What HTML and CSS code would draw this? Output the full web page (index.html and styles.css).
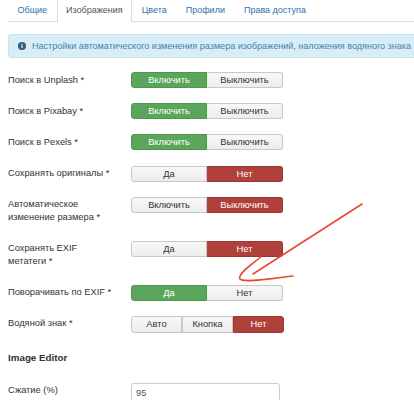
FILE: index.html
```html
<!DOCTYPE html>
<html lang="ru">
<head>
<meta charset="utf-8">
<link rel="stylesheet" href="styles.css">
</head>
<body>
<div class="page">
  <ul class="tabs">
    <li class="tab">Общие</li>
    <li class="tab active">Изображения</li>
    <li class="tab">Цвета</li>
    <li class="tab">Профили</li>
    <li class="tab">Права доступа</li>
  </ul>

  <div class="alert">
    <span class="info-icon">i</span>
    <span class="alert-text">Настройки автоматического изменения размера изображений, наложения водяного знака</span>
  </div>

  <div class="form">
    <div class="row">
      <div class="label">Поиск в Unplash *</div>
      <div class="group"><span class="btn green">Включить</span><span class="btn">Выключить</span></div>
    </div>
    <div class="row">
      <div class="label">Поиск в Pixabay *</div>
      <div class="group"><span class="btn green">Включить</span><span class="btn">Выключить</span></div>
    </div>
    <div class="row">
      <div class="label">Поиск в Pexels *</div>
      <div class="group"><span class="btn green">Включить</span><span class="btn">Выключить</span></div>
    </div>
    <div class="row">
      <div class="label">Сохранять оригиналы *</div>
      <div class="group"><span class="btn">Да</span><span class="btn red">Нет</span></div>
    </div>
    <div class="row">
      <div class="label">Автоматическое изменение размера *</div>
      <div class="group"><span class="btn">Включить</span><span class="btn red">Выключить</span></div>
    </div>
    <div class="row">
      <div class="label">Сохранять EXIF метатеги *</div>
      <div class="group"><span class="btn">Да</span><span class="btn red">Нет</span></div>
    </div>
    <div class="row">
      <div class="label">Поворачивать по EXIF *</div>
      <div class="group"><span class="btn green">Да</span><span class="btn">Нет</span></div>
    </div>
    <div class="row">
      <div class="label">Водяной знак *</div>
      <div class="group three"><span class="btn">Авто</span><span class="btn">Кнопка</span><span class="btn red">Нет</span></div>
    </div>

    <h3 class="section">Image Editor</h3>

    <div class="row">
      <div class="label">Сжатие (%)</div>
      <div class="input">95</div>
    </div>
  </div>

  <svg class="arrow" width="414" height="400" viewBox="0 0 414 400">
    <path d="M362 204 L253 274" />
    <path d="M261 257 C252 264 237 274 240 279 C243 283 268 279 293 276" />
  </svg>
</div>
</body>
</html>
```

FILE: styles.css
```css
html, body {
  margin: 0;
  padding: 0;
  overflow: hidden;
  background: #fff;
}

.page {
  position: relative;
  width: 414px;
  height: 400px;
  overflow: hidden;
  font-family: "Liberation Sans", Arial, sans-serif;
  font-size: 9.3px;
  color: #333;
}

.tabs {
  list-style: none;
  margin: 0 0 0 8px;
  padding: 0;
  display: flex;
  border-bottom: 1px solid #ddd;
  height: 21px;
  font-size: 9px;
}

.tab {
  padding: 3.5px 9.5px 0;
  line-height: 13px;
  color: #3071a9;
  height: 21px;
  box-sizing: border-box;
}

.tab.active {
  color: #555;
  background: #fff;
  border-left: 1px solid #ddd;
  border-right: 1px solid #ddd;
  height: 22px;
  padding-left: 8.5px;
  padding-right: 8.5px;
}

.alert {
  margin: 12px -80px 0 8px;
  background: #d9edf7;
  border: 1px solid #bce8f1;
  border-radius: 3px;
  color: #3a87ad;
  padding: 4.5px 0 4.5px 9px;
  line-height: 13px;
  display: flex;
  align-items: center;
  white-space: nowrap;
}

.alert-text {
  font-size: 9.05px;
}

.info-icon {
  width: 8px;
  height: 8px;
  border-radius: 50%;
  background: #2f5e7e;
  color: #d9edf7;
  font-size: 6px;
  font-weight: bold;
  line-height: 8px;
  text-align: center;
  margin-right: 6px;
  font-family: "DejaVu Serif", serif;
}

.form {
  margin: 14px 0 0 8px;
}

.row {
  display: flex;
  align-items: flex-start;
  margin-bottom: 15px;
}

.label {
  width: 105px;
  margin-right: 18px;
  padding: 1.5px 0 2px;
  line-height: 12.7px;
}

.group {
  display: flex;
  height: 16px;
}

.group.three {
  height: 17px;
}

.btn {
  width: 76px;
  box-sizing: border-box;
  display: flex;
  align-items: center;
  justify-content: center;
  background: linear-gradient(#f8f8f8, #ededed);
  border: 1px solid #c8c8c8;
  color: #333;
}

.group .btn + .btn {
  border-left: none;
}

.group .btn:first-child {
  border-radius: 3px 0 0 3px;
}

.group .btn:last-child {
  border-radius: 0 3px 3px 0;
}

.group.three .btn {
  width: 51px;
}

.group.three .btn + .btn {
  border-left: 1px solid #c8c8c8;
}

.btn.green {
  background: #5aa65a;
  border-color: #4e964e;
  color: #fff;
}

.btn.red {
  background: #b0403a;
  border-color: #9c3630;
  color: #fff;
}

.group.three .btn.red {
  border-left-color: #9c3630;
}

.section {
  margin: 18px 0 19px;
  font-size: 9.8px;
  line-height: 13px;
  font-weight: bold;
  color: #333;
}

.input {
  width: 149px;
  height: 20px;
  box-sizing: border-box;
  border: 1px solid #ccc;
  border-radius: 3px;
  padding: 2px 4px;
  color: #555;
  line-height: 14px;
}

.arrow {
  position: absolute;
  left: 0;
  top: 0;
  pointer-events: none;
}

.arrow path {
  fill: none;
  stroke: #e8472f;
  stroke-width: 1.5;
  stroke-linecap: round;
}
```
